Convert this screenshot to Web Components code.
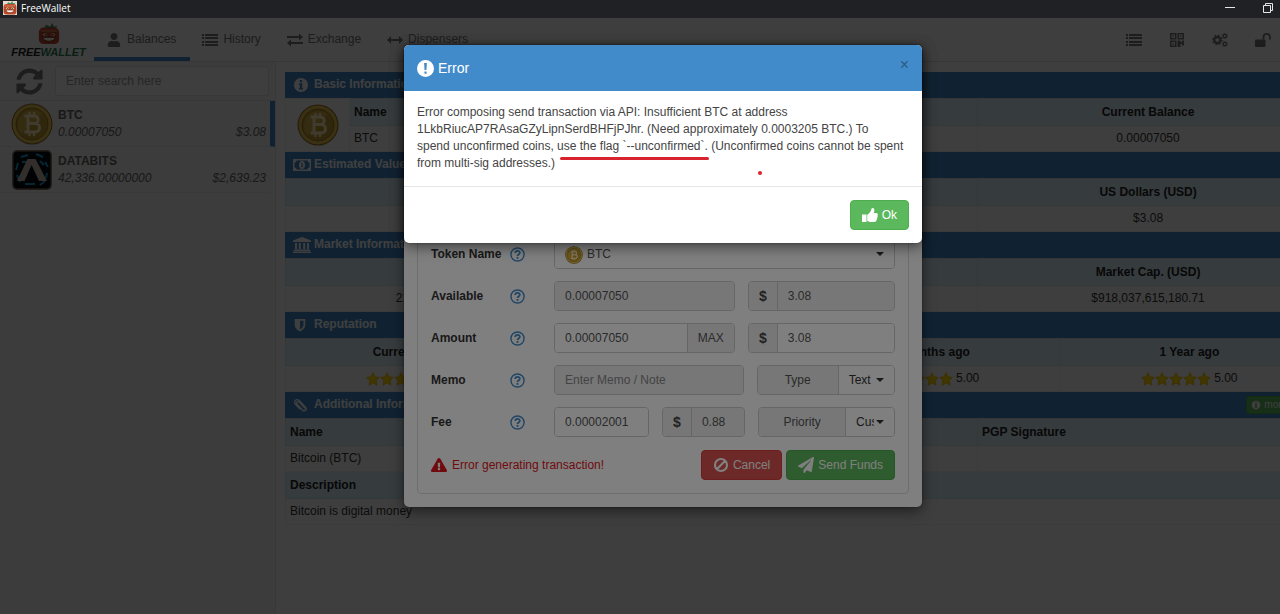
<!DOCTYPE html>
<html lang="en">
<head>
<meta charset="utf-8">
<title>FreeWallet</title>
<style>
  html, body {
    margin: 0;
    height: 100%;
    overflow: hidden;
  }
  body {
    background: #202124;
    font-family: "Liberation Sans", Arial, sans-serif;
    font-size: 12px;
    line-height: 17px;
    color: #333;
  }
</style>
</head>
<body>
<fw-app></fw-app>

<script>
const icons = {
  user: ['0 0 448 512', '<path d="M224 256c70.7 0 128-57.3 128-128S294.7 0 224 0 96 57.3 96 128s57.3 128 128 128zm89.6 32h-16.7c-22.2 10.2-46.9 16-72.9 16s-50.6-5.8-72.9-16h-16.7C60.2 288 0 348.2 0 422.4V464c0 26.5 21.5 48 48 48h352c26.5 0 48-21.5 48-48v-41.6c0-74.2-60.2-134.4-134.4-134.4z"/>'],
  list: ['0 0 16 16', '<path d="M0 2h2v2H0zM3 2h13v2H3zM0 5h2v2H0zM3 5h13v2H3zM0 9h2v2H0zM3 9h13v2H3zM0 12h2v2H0zM3 12h13v2H3z"/>'],
  exchange: ['0 0 16 16', '<path d="M0 4h12V1.500L16 5l-4 3.500V6H0zM16 10H4V7.500L0 11l4 3.500V12h12z"/>'],
  arrows: ['0 0 16 16', '<path d="M0 8l4-4v3h8V4l4 4-4 4V9H4v3z"/>'],
  refresh: ['0 0 512 512', '<path d="M370.72 133.28C339.458 104.008 298.888 87.962 255.848 88c-77.458.068-144.328 53.178-162.791 126.85-1.344 5.363-6.122 9.15-11.651 9.15H24.103c-7.498 0-13.194-6.807-11.807-14.176C33.933 94.924 134.813 8 256 8c66.448 0 126.791 26.136 171.315 68.685L463.03 40.97C478.149 25.851 504 36.559 504 57.941V192c0 13.255-10.745 24-24 24H345.941c-21.382 0-32.09-25.851-16.971-40.971l41.75-41.749zM32 296h134.059c21.382 0 32.09 25.851 16.971 40.971l-41.75 41.75c31.262 29.273 71.835 45.319 114.876 45.28 77.418-.07 144.315-53.144 162.787-126.849 1.344-5.363 6.122-9.15 11.651-9.15h57.304c7.498 0 13.194 6.807 11.807 14.176C478.067 417.076 377.187 504 256 504c-66.448 0-126.791-26.136-171.315-68.685L48.97 471.03C33.851 486.149 8 475.441 8 454.059V320c0-13.255 10.745-24 24-24z"/>'],
  qrcode: ['0 0 16 16', '<path fill-rule="evenodd" d="M1 1h6.500v6.500H1zM2.500 2.500v3.500H6V2.500zM8.500 1H15v6.500H8.500zM10 2.500v3.500h3.500V2.500zM1 8.500h6.500V15H1zM2.500 10v3.500H6V10zM8.500 8.500h3v1.500H13V8.500h2v5h-2V12h-1.500v3h-3z"/><path d="M3.500 3.500h1.500V5H3.500zM11 3.500h1.500V5H11zM3.500 11h1.500v1.500H3.500z"/>'],
  gears: ['0 0 18 16', '<g fill="none" stroke="currentColor"><circle cx="6" cy="8" r="3.400" stroke-width="2.600"/><circle cx="6" cy="8" r="5.200" stroke-width="1.600" stroke-dasharray="2.040 2.040"/><circle cx="14.500" cy="3.500" r="1.900" stroke-width="1.400"/><circle cx="14.500" cy="3.500" r="2.900" stroke-width="1" stroke-dasharray="1.500 1.500"/><circle cx="14.500" cy="12.500" r="1.900" stroke-width="1.400"/><circle cx="14.500" cy="12.500" r="2.900" stroke-width="1" stroke-dasharray="1.500 1.500"/></g>'],
  unlock: ['0 0 16 16', '<rect x="0" y="7.500" width="10.500" height="7.500" rx="1"/><path d="M8.500 7.500V5a3.200 3.200 0 0 1 6.400 0v2.500" fill="none" stroke="currentColor" stroke-width="1.800"/>'],
  power: ['0 0 16 16', '<path d="M5 3.500a6 6 0 1 0 6 0M8 1v7" fill="none" stroke="currentColor" stroke-width="2"/>'],
  info: ['0 0 16 16', '<path fill-rule="evenodd" d="M8 1a7 7 0 1 1 0 14A7 7 0 0 1 8 1zM6.800 3v2.200h2.400V3zM6 6.300v1.500h.8v3.200H6v1.500h4V11h-.8V6.300z"/>'],
  money: ['0 0 18 14', '<path fill-rule="evenodd" d="M0 1h18v12H0zM3.500 2.500a2 2 0 0 1-2 2v5a2 2 0 0 1 2 2h11a2 2 0 0 1 2-2v-5a2 2 0 0 1-2-2z"/><path fill-rule="evenodd" d="M9 3c4 0 4 8 0 8s-4-8 0-8zM8 5.800V6.500h.6v1.700H8V9h2.200v-.8h-.6V5h-.8z"/>'],
  bank: ['0 0 18 16', '<path d="M9 0l9 3.500V5H0V3.500zM2 6h2v6H2zM5.800 6h2v6h-2zM10.200 6h2v6h-2zM14 6h2v6h-2zM1 12.500h16V14H1zM0 14.500h18V16H0z"/>'],
  shield: ['0 0 16 16', '<path fill-rule="evenodd" d="M2 1h12v6.500c0 4-3 6.500-6 8-3-1.500-6-4-6-8zM8 3v10.200c2.400-1.400 4-3.200 4-5.700V3z"/>'],
  paperclip: ['0 0 16 16', '<path d="M13 11L6.600 4.200a1.700 1.700 0 0 0-2.500 2.400l6.200 6.600c2.600 2.600 5.800-.5 3.400-3.100L6.800 2.700C3.500-.5-.6 3.500 2.300 6.600l5.200 5.600" fill="none" stroke="currentColor" stroke-width="1.500" stroke-linecap="round" transform="translate(.5 .5)"/>'],
  star: ['0 0 16 16', '<path fill="#ffd800" stroke="#f5b800" stroke-linejoin="round" d="M8 .8l2.200 4.800 5 .6-3.700 3.600 1 5.200L8 12.400 3.500 15l1-5.200L.8 6.200l5-.6z"/>'],
  help: ['0 0 16 16', '<circle cx="8" cy="8" r="7" fill="none" stroke="currentColor" stroke-width="1.500"/><path d="M5.600 6.400C5.700 3.300 10.600 3.400 10.500 6.200 10.400 7.900 8 8 8 9.600" fill="none" stroke="currentColor" stroke-width="1.900"/><path d="M7 10.600h2v2H7z"/>'],
  warning: ['0 0 576 512', '<path d="M569.517 440.013C587.975 472.007 564.806 512 527.94 512H48.054c-36.937 0-59.999-40.055-41.577-71.987L246.423 23.985c18.467-32.009 64.72-31.951 83.154 0l239.94 416.028zM288 354c-25.405 0-46 20.595-46 46s20.595 46 46 46 46-20.595 46-46-20.595-46-46-46zm-43.673-165.346l7.418 136c.347 6.364 5.609 11.346 11.982 11.346h48.546c6.373 0 11.635-4.982 11.982-11.346l7.418-136c.375-6.874-5.098-12.654-11.982-12.654h-63.383c-6.884 0-12.356 5.78-11.981 12.654z"/>'],
  ban: ['0 0 16 16', '<path d="M8 2a6 6 0 1 1 0 12A6 6 0 0 1 8 2zM3.800 12.200l8.400-8.400" fill="none" stroke="currentColor" stroke-width="2.200"/>'],
  plane: ['0 0 512 512', '<path d="M476 3.200L12.500 270.600c-18.100 10.400-15.800 35.600 2.200 43.200L121 358.400l287.300-253.200c5.500-4.900 13.300 2.600 8.600 8.300L176 407v80.500c0 23.600 28.500 32.900 42.500 15.800L282 426l124.600 52.200c14.200 6 30.400-2.900 33-18.200l72-432C515 7.800 493.300-6.800 476 3.200z"/>'],
  thumb: ['0 0 16 16', '<path d="M0 7.500h4.500V15H0zM5.200 7.800C7 7 8.200 5 9 3.600 9.600 2.400 9.200 1 10.400 1c2.400 0 2.300 2.600 1.300 5H14c2 0 2.300 1.800 1.400 2.700.6.900.3 1.900-.4 2.300.3.900 0 1.700-.6 2 .2 1.300-.8 2-2.200 2H9.600c-2 0-3-.6-4.400-1z"/>'],
  exclamation: ['0 0 16 16', '<path fill-rule="evenodd" d="M8 0a8 8 0 1 1 0 16A8 8 0 0 1 8 0zM6.700 2.800l.4 6.500h1.800l.4-6.500zM7 10.800V13h2v-2.200z"/>'],
  btc: ['0 0 42 42', '<circle cx="21" cy="21" r="20.500" fill="#8a6a20"/><circle cx="21" cy="21" r="19.500" fill="#e8c050"/><circle cx="21" cy="21" r="16" fill="#c39a30" stroke="#9a7a24"/><path d="M10 31A15 15 0 0 1 31 10z" fill="#d6ae44"/><g fill="none" stroke="#ffedb8" stroke-width="3"><path d="M13.500 13H23c5.500 0 5.500 7.500 0 7.500h-6.500M16.500 20.500H24c6 0 6 8.500 0 8.500H13.500M17 13v16"/><path stroke-width="2.200" d="M18.500 9v4M23 9v4M18.500 29v4M23 29v4"/></g>'],
  databits: ['0 0 40 40', '<rect width="40" height="40" rx="5" fill="#8a7a5c"/><rect x="1.500" y="1.500" width="37" height="37" rx="4" fill="#060a10"/><g fill="none" stroke="#1499c8" stroke-width="2"><path d="M9 7l7-2M24 4l7 3M33 12l3 5M6 13l-2 7M5 25l3 7M13 34h10M28 35l5-4M35 23l-1 5M10 12h5M28 11l4 4"/></g><path d="M5 31L15.500 9h8L35 31h-8l-7.500-16L12.500 31z" fill="#c6b8ae"/>'],
  robot: ['0 0 24 24', '<path d="M7 5l2-3 4 2 3-4 1 4 5-1-4 3z" fill="#3e8a60"/><rect x="1" y="5" width="22" height="18" rx="5" fill="#b8472c"/><path d="M3 7h18v3H3z" fill="#cf6a48"/><path d="M5 10.500l4 1.500M19 10.500L15 12" stroke="#5e2012" stroke-width="1.500"/><circle cx="7.500" cy="12.500" r="2" fill="#ffe0b0"/><circle cx="16.500" cy="12.500" r="2" fill="#ffe0b0"/><circle cx="8" cy="12.500" r="1" fill="#331"/><circle cx="16" cy="12.500" r="1" fill="#331"/><path d="M5 15.500h14c-1 6-13 6-14 0z" fill="#fff4e6" stroke="#5e2012"/>'],
  minimise: ['0 0 10 10', '<path d="M0 4h10v1H0z"/>'],
  maximise: ['0 0 10 10', '<path d="M.5 2.500h7v7h-7zM2.500 2.500v-2h7v7h-2" fill="none" stroke="currentColor"/>'],
  close: ['0 0 10 10', '<path d="M0 0l10 10M10 0L0 10" stroke="currentColor"/>']
}

customElements.define('fw-icon', class extends HTMLElement {
  constructor() {
    super()
    this.attachShadow({mode: 'open'})
  }

  connectedCallback() {
    const [box, shape] = icons[this.getAttribute('name')]
    this.shadowRoot.innerHTML = `
    <style>
      :host {
        display: inline-block;
        flex: none;
        width: var(--icon-size, 16px);
        height: var(--icon-size, 16px);
        vertical-align: middle;
      }
      svg {
        display: block;
        width: 100%;
        height: 100%;
      }
    </style>
    <svg viewBox="${box}" fill="currentColor" aria-hidden="true">${shape}</svg>
    `
  }
})

class FwElement extends HTMLElement {
  constructor() {
    super()
    this.attachShadow({mode: 'open'})
  }

  connectedCallback() {
    this.shadowRoot.innerHTML = this.template
  }
}

customElements.define('fw-titlebar', class extends FwElement {
  get template() {
    return `
    <style>
      :host {
        display: flex;
        align-items: center;
        flex: none;
        height: 18px;
        box-sizing: border-box;
        padding: 0 15px 2px 3px;
        gap: 4px;
        background: #202124;
        color: #fff;
        font-family: "Open Sans", "Noto Sans", sans-serif;
        font-size: 10px;
      }
      .logo {
        --icon-size: 14px;
        background: #e9d9cf;
      }
      .flex {
        flex: 1;
      }
      button {
        --icon-size: 10px;
        display: flex;
        border: 0;
        padding: 0;
        margin-left: 24px;
        background: none;
        color: #e6e6e6;
      }
    </style>
    <fw-icon class="logo" name="robot"></fw-icon>
    <span>FreeWallet</span>
    <span class="flex"></span>
    <button aria-label="Minimise"><fw-icon name="minimise"></fw-icon></button>
    <button aria-label="Maximise"><fw-icon name="maximise"></fw-icon></button>
    <button aria-label="Close"><fw-icon name="close"></fw-icon></button>
    `
  }
})

customElements.define('fw-nav-item', class extends FwElement {
  get template() {
    return `
    <style>
      :host {
        display: flex;
      }
      a {
        display: flex;
        align-items: center;
        gap: 5px;
        padding: 4px 14px 0 12px;
        border-bottom: 4px solid transparent;
        color: #777;
        text-decoration: none;
      }
      :host([active]) a {
        border-color: #428bca;
      }
      fw-icon {
        --icon-size: 16px;
      }
      fw-icon[name="user"] {
        height: 14px;
      }
    </style>
    <a href="#${this.getAttribute('icon')}"><fw-icon name="${this.getAttribute('icon')}"></fw-icon><slot></slot></a>
    `
  }
})

customElements.define('fw-header', class extends FwElement {
  get template() {
    return `
    <style>
      :host {
        display: flex;
        flex: none;
        height: 44px;
        box-sizing: border-box;
        padding: 0 12px 0 11px;
        background: #f8f8f8;
        border-bottom: 1px solid #ddd;
      }
      .logo {
        --icon-size: 22px;
        display: flex;
        flex-direction: column;
        align-items: center;
        width: 75px;
        margin-right: 8px;
        padding-top: 5px;
        box-sizing: border-box;
        color: #222;
        font-size: 11px;
        font-weight: bold;
        font-style: italic;
        line-height: 14px;
        text-decoration: none;
      }
      .logo em {
        color: #2a7a55;
      }
      nav {
        display: flex;
      }
      .flex {
        flex: 1;
      }
      .tools {
        display: flex;
        align-items: center;
        gap: 27px;
      }
      button {
        display: flex;
        border: 0;
        padding: 0;
        background: none;
        color: #777;
      }
    </style>
    <a class="logo" href="#home"><fw-icon name="robot"></fw-icon><span>FREE<em>WALLET</em></span></a>
    <nav>
      <fw-nav-item icon="user" active>Balances</fw-nav-item>
      <fw-nav-item icon="list">History</fw-nav-item>
      <fw-nav-item icon="exchange">Exchange</fw-nav-item>
      <fw-nav-item icon="arrows">Dispensers</fw-nav-item>
    </nav>
    <span class="flex"></span>
    <div class="tools">
      <button aria-label="Addresses"><fw-icon name="list"></fw-icon></button>
      <button aria-label="Scan code"><fw-icon name="qrcode"></fw-icon></button>
      <button aria-label="Settings"><fw-icon name="gears"></fw-icon></button>
      <button aria-label="Lock wallet"><fw-icon name="unlock"></fw-icon></button>
      <button aria-label="Exit"><fw-icon name="power"></fw-icon></button>
    </div>
    `
  }
})

customElements.define('fw-balance', class extends FwElement {
  get template() {
    return `
    <style>
      :host {
        display: flex;
        align-items: center;
        height: 46px;
        box-sizing: border-box;
        gap: 5px;
        padding: 0 4px 0 11px;
        border-right: 5px solid transparent;
        border-bottom: 1px solid #e6e6e6;
        color: #666;
      }
      :host([active]) {
        border-right-color: #428bca;
      }
      fw-icon {
        --icon-size: 42px;
      }
      fw-icon[name="databits"] {
        height: 40px;
      }
      .text {
        flex: 1;
      }
      .row {
        display: flex;
        justify-content: space-between;
        font-style: italic;
      }
    </style>
    <fw-icon name="${this.getAttribute('icon')}"></fw-icon>
    <div class="text">
      <b><slot></slot></b>
      <div class="row"><span>${this.getAttribute('quantity')}</span><span>${this.getAttribute('value')}</span></div>
    </div>
    `
  }
})

customElements.define('fw-sidebar', class extends FwElement {
  get template() {
    return `
    <style>
      :host {
        display: block;
        flex: none;
        width: 275px;
        background: #f0f0f0;
        border-right: 1px solid #e0e0e0;
      }
      .search {
        display: flex;
        align-items: center;
        gap: 12px;
        height: 39px;
        box-sizing: border-box;
        padding: 0 6px 0 16px;
        border-bottom: 1px solid #ddd;
      }
      button {
        --icon-size: 27px;
        display: flex;
        border: 0;
        padding: 0;
        background: none;
        color: #777;
      }
      input {
        flex: 1;
        min-width: 0;
        height: 30px;
        box-sizing: border-box;
        padding: 0 10px;
        border: 1px solid #ddd;
        border-radius: 3px;
        background: #f8f8f8;
        font: inherit;
      }
      input::placeholder {
        color: #999;
      }
    </style>
    <div class="search">
      <button aria-label="Refresh"><fw-icon name="refresh"></fw-icon></button>
      <input type="search" aria-label="Search" placeholder="Enter search here">
    </div>
    <fw-balance icon="btc" quantity="0.00007050" value="$3.08" active>BTC</fw-balance>
    <fw-balance icon="databits" quantity="42,336.00000000" value="$2,639.23">DATABITS</fw-balance>
    `
  }
})

customElements.define('fw-bar', class extends FwElement {
  get template() {
    return `
    <style>
      :host {
        display: flex;
        align-items: center;
        gap: 3px;
        height: 26px;
        box-sizing: border-box;
        padding: 0 8px 1px;
        background: #428bca;
        color: #fff;
      }
      fw-icon {
        width: 18px;
      }
      fw-icon[name="shield"], fw-icon[name="paperclip"] {
        width: 14px;
        margin-right: 4px;
      }
      fw-icon[name="info"] {
        width: 16px;
        margin-right: 2px;
      }
      h2 {
        flex: 1;
        margin: 0;
        font-size: 12px;
      }
    </style>
    <fw-icon name="${this.getAttribute('icon')}"></fw-icon>
    <h2>${this.getAttribute('heading')}</h2>
    <slot></slot>
    `
  }
})

customElements.define('fw-rating', class extends FwElement {
  get template() {
    return `
    <style>
      :host {
        --icon-size: 14px;
        display: flex;
        align-items: center;
        justify-content: center;
      }
      span {
        margin-left: 3px;
      }
    </style>
    ${'<fw-icon name="star"></fw-icon>'.repeat(5)}<span><slot></slot></span>
    `
  }
})

customElements.define('fw-token-info', class extends FwElement {
  get template() {
    return `
    <style>
      :host {
        display: block;
        flex: 1;
        min-width: 0;
        padding: 10px 7px 0 9px;
        background: #f8f8f8;
      }
      table {
        width: 100%;
        table-layout: fixed;
        border-collapse: collapse;
        text-align: center;
      }
      th, td {
        height: 26px;
        box-sizing: border-box;
        padding: 0 4px;
        border: 1px solid #ececec;
      }
      th {
        height: 27px;
        background: #d9edf7;
        border-color: #d2e2ea;
        color: #222;
      }
      .left {
        text-align: left;
      }
      .coin {
        --icon-size: 42px;
        width: 64px;
      }
      .name {
        width: 628px;
      }
      .first {
        width: 34%;
      }
      .wide {
        width: 67%;
      }
      button {
        --icon-size: 10px;
        display: flex;
        align-items: center;
        gap: 3px;
        height: 18px;
        border: 1px solid #4cae4c;
        border-radius: 3px;
        padding: 0 4px;
        background: #5cb85c;
        color: #fff;
        font: inherit;
        font-size: 10px;
      }
    </style>
    <fw-bar icon="info" heading="Basic Information"></fw-bar>
    <table>
      <tr><td class="coin" rowspan="2"><fw-icon name="btc"></fw-icon></td><th class="left name">Name</th><th>Current Balance</th></tr>
      <tr><td class="left">BTC</td><td>0.00007050</td></tr>
    </table>
    <fw-bar icon="money" heading="Estimated Value"></fw-bar>
    <table>
      <tr><th class="first"></th><th></th><th>US Dollars (USD)</th></tr>
      <tr><td></td><td></td><td>$3.08</td></tr>
    </table>
    <fw-bar icon="bank" heading="Market Information"></fw-bar>
    <table>
      <tr><th class="first"></th><th></th><th>Market Cap. (USD)</th></tr>
      <tr><td>21,012,345.000000 BTC</td><td></td><td>$918,037,615,180.71</td></tr>
    </table>
    <fw-bar icon="shield" heading="Reputation"></fw-bar>
    <table>
      <tr><th>Current Rating</th><th></th><th>6 Months ago</th><th>1 Year ago</th></tr>
      <tr><td><fw-rating>5.00</fw-rating></td><td></td><td><fw-rating>5.00</fw-rating></td><td><fw-rating>5.00</fw-rating></td></tr>
    </table>
    <fw-bar icon="paperclip" heading="Additional Information"><button><fw-icon name="info"></fw-icon>more info</button></fw-bar>
    <table>
      <tr><th class="left wide">Name</th><th class="left">PGP Signature</th></tr>
      <tr><td class="left">Bitcoin (BTC)</td><td></td></tr>
      <tr><th class="left" colspan="2">Description</th></tr>
      <tr><td class="left" colspan="2">Bitcoin is digital money</td></tr>
    </table>
    `
  }
})

customElements.define('fw-button', class extends FwElement {
  get template() {
    return `
    <style>
      :host {
        display: inline-flex;
      }
      button {
        --icon-size: 16px;
        display: flex;
        align-items: center;
        gap: 4px;
        height: 30px;
        padding: 0 11px;
        border: 1px solid #4cae4c;
        border-radius: 4px;
        background: #5cb85c;
        color: #fff;
        font: inherit;
        white-space: nowrap;
      }
      :host([kind="danger"]) button {
        border-color: #d43f3a;
        background: #d9534f;
      }
    </style>
    <button><fw-icon name="${this.getAttribute('icon')}"></fw-icon><slot></slot></button>
    `
  }
})

customElements.define('fw-send-form', class extends FwElement {
  get template() {
    return `
    <style>
      :host {
        display: block;
      }
      .panel {
        display: flex;
        flex-direction: column;
        justify-content: flex-end;
        gap: 12px;
        min-height: 390px;
        box-sizing: border-box;
        padding: 13px;
        border: 1px solid #ddd;
        border-radius: 4px;
      }
      .row {
        display: grid;
        grid-template-columns: 79px 44px minmax(0, 1fr);
        align-items: center;
      }
      .row > label {
        font-weight: bold;
        color: #333;
      }
      .row > fw-icon {
        color: #428bca;
        --icon-size: 15px;
      }
      .controls {
        display: flex;
        gap: 13px;
      }
      .group {
        display: flex;
        min-width: 0;
        flex: 1 1 0;
        height: 30px;
        box-sizing: border-box;
        border: 1px solid #ccc;
        border-radius: 4px;
        overflow: hidden;
      }
      .crypto { flex-grow: 181 }
      .fiat { flex-grow: 147 }
      .memo { flex-grow: 190 }
      .fee { flex-grow: 95 }
      .fee-fiat { flex-grow: 83 }
      .choice { flex-grow: 138 }
      input, select {
        flex: 1;
        min-width: 0;
        width: 100%;
        border: 0;
        margin: 0;
        padding: 0 10px;
        background: #fff;
        color: #555;
        font: inherit;
        appearance: none;
        opacity: 1;
      }
      input:disabled {
        background: #eee;
      }
      input::placeholder {
        color: #888;
      }
      .addon {
        display: flex;
        align-items: center;
        justify-content: center;
        width: 28px;
        flex: none;
        border: 0;
        border-right: 1px solid #ccc;
        padding: 0;
        background: #eee;
        color: #555;
        font: inherit;
      }
      .dollar {
        color: #444;
        font-size: 14px;
        font-weight: bold;
      }
      .max {
        width: 47px;
        border-right: 0;
        border-left: 1px solid #ccc;
      }
      .type { width: 80px }
      .priority { width: 86px }
      .select {
        position: relative;
        display: flex;
        flex: 1;
        min-width: 0;
      }
      .select::after {
        content: "";
        position: absolute;
        right: 10px;
        top: 12px;
        border: 4px solid transparent;
        border-top-color: #333;
        border-bottom: 0;
        pointer-events: none;
      }
      .select select {
        padding-right: 20px;
        color: #333;
      }
      .select fw-icon {
        --icon-size: 18px;
        position: absolute;
        left: 10px;
        top: 6px;
      }
      .token select {
        padding-left: 32px;
        color: #555;
      }
      .footer {
        display: flex;
        align-items: center;
        gap: 4px;
        padding-top: 1px;
      }
      .error {
        display: flex;
        flex: 1;
        align-items: center;
        gap: 5px;
        color: #e0141c;
      }
    </style>
    <form class="panel" onsubmit="return false">
      <div class="row">
        <label for="token">Token Name</label><fw-icon name="help"></fw-icon>
        <div class="controls"><div class="group"><div class="select token"><select id="token"><option>BTC</option></select><fw-icon name="btc"></fw-icon></div></div></div>
      </div>
      <div class="row">
        <label for="available">Available</label><fw-icon name="help"></fw-icon>
        <div class="controls">
          <div class="group crypto"><input id="available" value="0.00007050" disabled></div>
          <div class="group fiat"><span class="addon dollar">$</span><input aria-label="Available in dollars" value="3.08" disabled></div>
        </div>
      </div>
      <div class="row">
        <label for="amount">Amount</label><fw-icon name="help"></fw-icon>
        <div class="controls">
          <div class="group crypto"><input id="amount" value="0.00007050"><button class="addon max">MAX</button></div>
          <div class="group fiat"><span class="addon dollar">$</span><input aria-label="Amount in dollars" value="3.08"></div>
        </div>
      </div>
      <div class="row">
        <label for="memo">Memo</label><fw-icon name="help"></fw-icon>
        <div class="controls">
          <div class="group memo"><input id="memo" placeholder="Enter Memo / Note" disabled></div>
          <div class="group choice"><label class="addon type" for="type">Type</label><div class="select"><select id="type"><option>Text</option></select></div></div>
        </div>
      </div>
      <div class="row">
        <label for="fee">Fee</label><fw-icon name="help"></fw-icon>
        <div class="controls">
          <div class="group fee"><input id="fee" value="0.00002001"></div>
          <div class="group fee-fiat"><span class="addon dollar">$</span><input aria-label="Fee in dollars" value="0.88" disabled></div>
          <div class="group choice"><label class="addon priority" for="priority">Priority</label><div class="select"><select id="priority"><option>Custom</option></select></div></div>
        </div>
      </div>
      <div class="footer">
        <span class="error"><fw-icon name="warning"></fw-icon>Error generating transaction!</span>
        <fw-button kind="danger" icon="ban">Cancel</fw-button>
        <fw-button icon="plane">Send Funds</fw-button>
      </div>
    </form>
    `
  }
})

// dims everything below it and floats a dialog over the wallet
customElements.define('fw-modal', class extends FwElement {
  get template() {
    return `
    <style>
      :host {
        position: absolute;
        inset: 0;
        display: flex;
        align-items: flex-start;
        justify-content: center;
        padding-top: 27px;
        background: rgba(0, 0, 0, .5);
      }
      .dialog {
        width: 518px;
        border-radius: 5px;
        background: #fff;
        box-shadow: 0 4px 13px rgba(0, 0, 0, .5), 0 0 2px rgba(0, 0, 0, .4);
        overflow: hidden;
      }
      header {
        display: flex;
        align-items: center;
        gap: 4px;
        height: 46px;
        box-sizing: border-box;
        padding: 0 13px;
        background: #428bca;
        color: #fff;
      }
      header fw-icon {
        --icon-size: 17px;
      }
      h1 {
        flex: 1;
        margin: 0;
        font-size: 14px;
        font-weight: normal;
      }
      header button {
        align-self: flex-start;
        margin-top: 11px;
        padding: 0;
        border: 0;
        background: none;
        color: #2a5a84;
        font: inherit;
        font-size: 16px;
      }
      .body {
        padding: 13px;
      }
    </style>
    <div class="dialog" role="dialog" aria-modal="true">
      <header>
        ${this.hasAttribute('heading') ? `
        <fw-icon name="exclamation"></fw-icon>
        <h1>${this.getAttribute('heading')}</h1>
        <button aria-label="Close">×</button>` : ''}
      </header>
      <div class="body"><slot></slot></div>
      <slot name="footer"></slot>
    </div>
    `
  }
})

customElements.define('fw-app', class extends FwElement {
  get template() {
    return `
    <style>
      /* the window is dragged partly past the right edge of the desktop */
      :host {
        display: flex;
        flex-direction: column;
        width: calc(100% + 46px);
        height: 100%;
      }
      .wallet {
        position: relative;
        display: flex;
        flex-direction: column;
        flex: 1;
        min-height: 0;
        overflow: hidden;
      }
      main {
        display: flex;
        flex: 1;
        min-height: 0;
      }
      p {
        position: relative;
        margin: 0;
        padding-bottom: 1px;
        color: #444;
      }
      .marked {
        position: relative;
      }
      .marked::after {
        content: "";
        position: absolute;
        left: 3px;
        right: -4px;
        bottom: -7px;
        height: 3px;
        border-radius: 2px;
        background: #d8232e;
      }
      .dot {
        position: absolute;
        right: 147px;
        bottom: -2px;
        width: 4px;
        height: 4px;
        border-radius: 2px;
        background: #d8232e;
      }
      .footer {
        display: flex;
        justify-content: flex-end;
        padding: 13px;
        border-top: 1px solid #e5e5e5;
      }
    </style>
    <fw-titlebar></fw-titlebar>
    <div class="wallet">
      <fw-header></fw-header>
      <main>
        <fw-sidebar></fw-sidebar>
        <fw-token-info></fw-token-info>
      </main>
      <fw-modal><fw-send-form></fw-send-form></fw-modal>
      <fw-modal heading="Error">
        <p>Error composing send transaction via API: Insufficient BTC at address<br>1LkbRiucAP7RAsaGZyLipnSerdBHFjPJhr. (Need approximately 0.0003205 BTC.) To<br>spend unconfirmed coins, <span class="marked">use the flag \`--unconfirmed\`</span>. (Unconfirmed coins cannot be spent<br>from multi-sig addresses.)<span class="dot"></span></p>
        <div class="footer" slot="footer"><fw-button icon="thumb">Ok</fw-button></div>
      </fw-modal>
    </div>
    `
  }
})
</script>
</body>
</html>
